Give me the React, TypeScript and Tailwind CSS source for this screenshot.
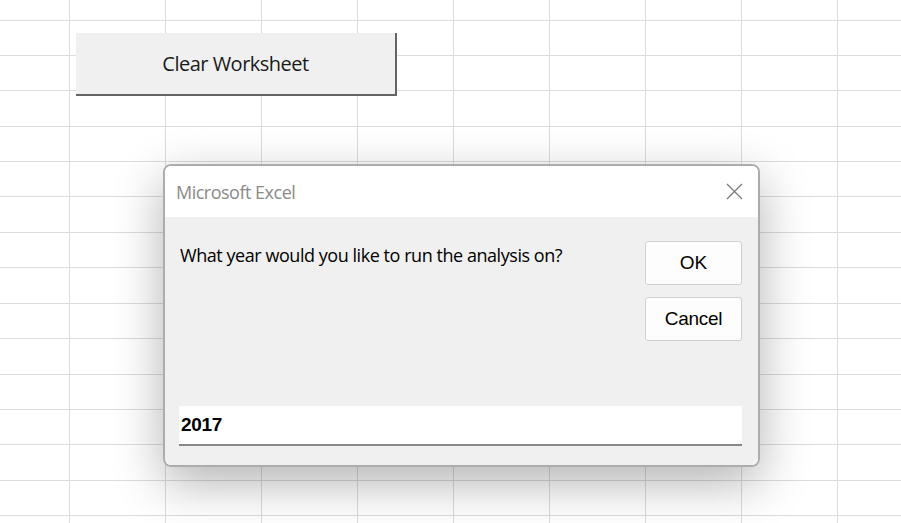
const cols = [70, 96, 96, 96, 96, 96, 96, 96, 96, 96];
const rows = [21, 35, 35, 36, 35, 35, 36, 35, 36, 35, 36, 35, 35, 36, 35, 36];

function Sheet() {
  return (
    <div className="flex flex-col">
      {rows.map((h, r) => (
        <div key={r} className="flex" style={{ height: h }}>
          {cols.map((w, c) => (
            <div
              key={c}
              className="shrink-0 border-r border-b border-[#dcdcdc]"
              style={{ width: w }}
            />
          ))}
        </div>
      ))}
    </div>
  );
}

function CloseIcon() {
  return (
    <svg width="17" height="17" viewBox="0 0 17 17" fill="none">
      <path d="M1 1L16 16M16 1L1 16" stroke="#7a7a7a" strokeWidth="1.3" />
    </svg>
  );
}

export default function App() {
  return (
    <div className="relative w-[901px] h-[523px] overflow-hidden bg-white">
      <Sheet />

      {/* worksheet button */}
      <div className="absolute left-[76px] top-[33px] w-[321px] h-[63px] flex items-center justify-center bg-[#f0f0f0] border-r-2 border-b-2 border-[#646464]">
        <span className="font-['Open_Sans','Noto_Sans',sans-serif] text-[20px] text-[#1a1a1a] tracking-[-0.5px] pt-[1px]">
          Clear Worksheet
        </span>
      </div>

      {/* input box dialog */}
      <div className="absolute left-[163px] top-[164px] w-[597px] h-[303px] flex flex-col rounded-lg border-2 border-[#acacac] overflow-hidden shadow-[0_16px_50px_rgba(0,0,0,0.3)]">
        <div className="h-[51px] shrink-0 bg-white flex items-center justify-between pl-[11px] pr-[15px]">
          <span className="font-['Open_Sans','Noto_Sans',sans-serif] text-[18px] text-[#8a8a8a] tracking-[-0.5px] pt-[2px]">
            Microsoft Excel
          </span>
          <CloseIcon />
        </div>
        <div className="flex-1 bg-[#f0f0f0] flex flex-col pl-[14px] pr-[16px] pb-[19px]">
          <div className="flex justify-between pt-[24px]">
            <p className="font-['Open_Sans','Noto_Sans',sans-serif] text-[18px] text-black tracking-[-0.45px] pl-[1px] pt-[1px]">
              What year would you like to run the analysis on?
            </p>
            <div className="flex flex-col gap-[12px]">
              <button className="w-[97px] h-[44px] rounded-[3px] border border-[#cfcfcf] bg-[#fdfdfd] font-['Liberation_Sans',sans-serif] text-[19px] text-black">
                OK
              </button>
              <button className="w-[97px] h-[44px] rounded-[3px] border border-[#cfcfcf] bg-[#fdfdfd] font-['Liberation_Sans',sans-serif] text-[19px] text-black tracking-[-0.3px]">
                Cancel
              </button>
            </div>
          </div>
          <div className="flex-1" />
          <div className="h-[40px] bg-white border-b-2 border-[#888888] flex items-center pl-[2px]">
            <span className="font-['Liberation_Sans',sans-serif] font-bold text-[19px] text-black tracking-[-0.3px]">
              2017
            </span>
          </div>
        </div>
      </div>
    </div>
  );
}
